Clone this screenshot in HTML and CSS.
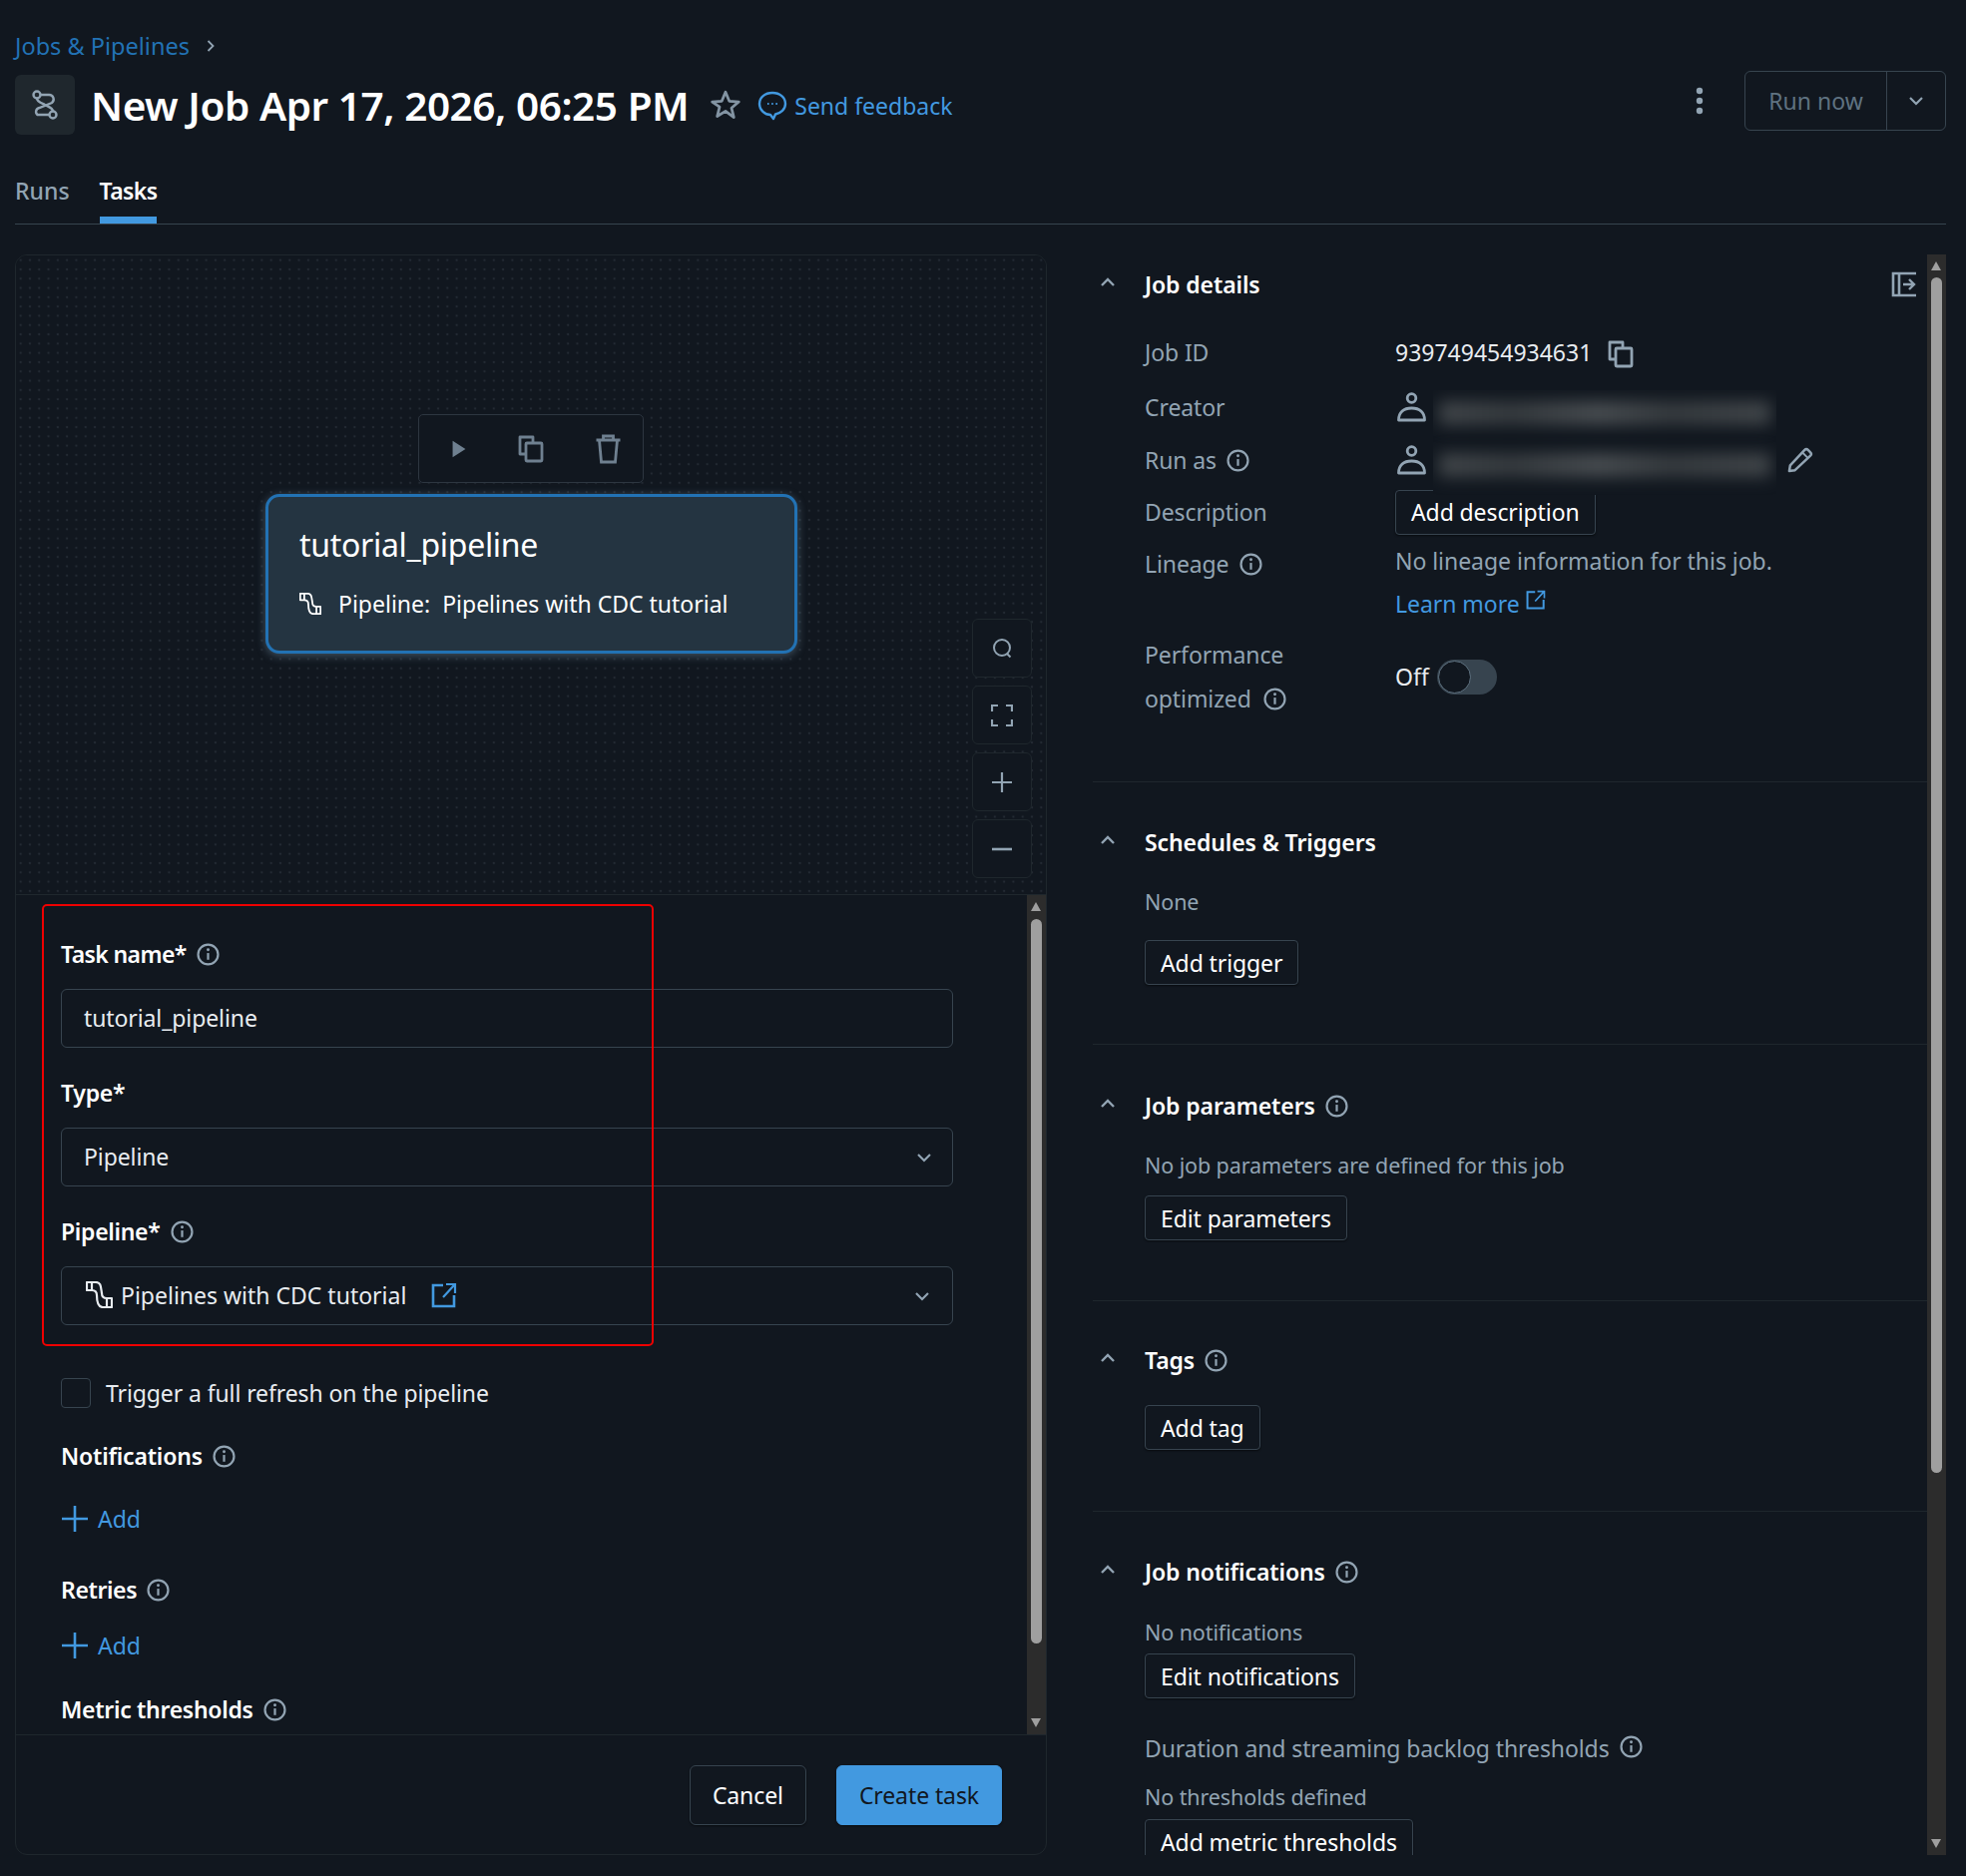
FILE: index.html

```html
<!DOCTYPE html>
<html lang="en">
<head>
    <meta charset="UTF-8">
    <title>New Job Apr 17, 2026, 06:25 PM</title>
    <link rel="stylesheet" href="styles.css">
</head>
<body>
    <svg class="defs" width="0" height="0">
        <symbol id="i-info" viewBox="0 0 24 24">
            <circle cx="12" cy="12" r="10.400" fill="none" stroke="currentColor" stroke-width="2.300"/>
            <path d="M12 10.500v7" stroke="currentColor" stroke-width="2.300"/>
            <circle cx="12" cy="7" r="1.500" fill="currentColor"/>
        </symbol>
        <symbol id="i-chev" viewBox="0 0 16 10">
            <path d="M2 2l6 6 6-6" fill="none" stroke="currentColor" stroke-width="2.200"/>
        </symbol>
        <symbol id="i-up" viewBox="0 0 16 10">
            <path d="M2 8l6-6 6 6" fill="none" stroke="currentColor" stroke-width="2.400"/>
        </symbol>
        <symbol id="i-pipe" viewBox="0 0 27 27">
            <path d="M1 1H10C15 1 15 5 16 12C16 15 18 17 21 17H26V26H17C12 26 11 21 11 14C11 11 9 9 6 9H1Z" fill="none" stroke="currentColor" stroke-width="2.200" stroke-linejoin="round"/>
            <path d="M6 1V9M21 17V26" stroke="currentColor" stroke-width="2.200"/>
        </symbol>
        <symbol id="i-ext" viewBox="0 0 26 26">
            <path d="M12 3H2v21h21V13" fill="none" stroke="currentColor" stroke-width="2.600"/>
            <path d="M12 15L23 3M15 2h9v9" fill="none" stroke="currentColor" stroke-width="2.200"/>
        </symbol>
        <symbol id="i-copy" viewBox="0 0 26 28">
            <path d="M7 19H2V2h13v6" fill="none" stroke="currentColor" stroke-width="2.800" stroke-linejoin="round"/>
            <rect x="8" y="8" width="16" height="18" rx="1" fill="none" stroke="currentColor" stroke-width="2.800"/>
        </symbol>
        <symbol id="i-user" viewBox="0 0 30 30">
            <circle cx="15" cy="6" r="4.300" fill="none" stroke="currentColor" stroke-width="2.800"/>
            <path d="M2 28c0-8 5-12 13-12s13 4 13 12z" fill="none" stroke="currentColor" stroke-width="2.800" stroke-linejoin="round"/>
        </symbol>
        <symbol id="i-plus" viewBox="0 0 28 28">
            <path d="M14 1v26M1 14h26" stroke="currentColor" stroke-width="2.600"/>
        </symbol>
    </svg>

    <div class="page">
        <div class="crumbs"><a class="link">Jobs &amp; Pipelines</a><svg class="crumb-sep" viewBox="0 0 8 14"><path d="M1.500 2l5 5-5 5" fill="none" stroke="currentColor" stroke-width="1.800"/></svg></div>

        <header class="title-row">
            <div class="job-icon">
                <svg viewBox="0 0 26 30" width="26" height="30"><g fill="none" stroke="currentColor" stroke-width="2.400"><circle cx="5" cy="5" r="3.500"/><circle cx="21" cy="25" r="3.500"/><path d="M8.500 5H17a4.500 4.500 0 0 1 3 8L7.500 18a4 4 0 0 0-2 7H17.500"/><path d="M5 8.500C5 12 9 13 13 15C17 17 21 18 21 21.500"/></g></svg>
            </div>
            <h1 class="title">New Job Apr 17, 2026, 06:25 PM</h1>
            <svg class="star" viewBox="0 0 30 30"><path d="M15 3l3.500 8.500 9 .7-6.900 5.800 2.200 8.800L15 21l-7.800 4.800 2.200-8.800L2.500 12.200l9-.7z" fill="none" stroke="currentColor" stroke-width="2.600" stroke-linejoin="round"/></svg>
            <svg class="bubble" viewBox="0 0 30 30"><path d="M15 2C7.500 2 2 6.800 2 13s5.500 11 11 11l3 4 2-4.500c5.500-1 10-5 10-10.500C28 6.800 22.500 2 15 2z" fill="none" stroke="currentColor" stroke-width="2.400" stroke-linejoin="round"/><path d="M10 13h1.500M14.200 13h1.500M18.400 13h1.500" stroke="currentColor" stroke-width="2"/></svg>
            <a class="link feedback">Send feedback</a>
            <div class="spacer"></div>
            <svg class="kebab" viewBox="0 0 8 28"><circle cx="4" cy="4" r="3.200"/><circle cx="4" cy="14" r="3.200"/><circle cx="4" cy="24" r="3.200"/></svg>
            <div class="run-group">
                <span class="run-btn">Run now</span>
                <span class="run-caret"><svg class="chev-sm"><use href="#i-chev"/></svg></span>
            </div>
        </header>

        <nav class="tabs">
            <span class="tab">Runs</span>
            <span class="tab tab-on">Tasks</span>
        </nav>

        <main class="split">
            <section class="left">
                <div class="canvas">
                    <div class="node-tools">
                        <svg class="tool play" viewBox="0 0 16 24"><path d="M1 3l14 9-14 9z" fill="currentColor"/></svg>
                        <svg class="tool"><use href="#i-copy"/></svg>
                        <svg class="tool trash" viewBox="0 0 26 30"><path d="M1 6h24M8 6V2h10v4M4 6l2 22h14l2-22" fill="none" stroke="currentColor" stroke-width="2.800"/></svg>
                    </div>
                    <div class="node">
                        <div class="node-name">tutorial_pipeline</div>
                        <div class="node-sub"><svg class="pipe-sm"><use href="#i-pipe"/></svg><span>Pipeline:&nbsp; Pipelines with CDC tutorial</span></div>
                    </div>
                    <div class="zoom-bar">
                        <div class="zoom-btn"><svg viewBox="0 0 24 24" width="24" height="24"><circle cx="12" cy="11" r="8" fill="none" stroke="currentColor" stroke-width="2"/><path d="M17 17l3.500 3.500" stroke="currentColor" stroke-width="2"/></svg></div>
                        <div class="zoom-btn"><svg viewBox="0 0 22 22" width="22" height="22"><path d="M1 7V1h6M15 1h6v6M21 15v6h-6M7 21H1v-6" fill="none" stroke="currentColor" stroke-width="2.200"/></svg></div>
                        <div class="zoom-btn"><svg viewBox="0 0 22 22" width="22" height="22"><path d="M11 1v20M1 11h20" stroke="currentColor" stroke-width="2.200"/></svg></div>
                        <div class="zoom-btn"><svg viewBox="0 0 22 22" width="22" height="22"><path d="M1 11h20" stroke="currentColor" stroke-width="2.600"/></svg></div>
                    </div>
                </div>

                <div class="form-pane">
                    <div class="form">
                        <div class="f-label first">Task name* <svg class="info"><use href="#i-info"/></svg></div>
                        <div class="f-input">tutorial_pipeline</div>
                        <div class="f-label">Type*</div>
                        <div class="f-input">Pipeline<svg class="chev-sm f-caret"><use href="#i-chev"/></svg></div>
                        <div class="f-label">Pipeline* <svg class="info"><use href="#i-info"/></svg></div>
                        <div class="f-input f-pipe">
                            <svg class="pipe-md"><use href="#i-pipe"/></svg>
                            <span>Pipelines with CDC tutorial</span>
                            <svg class="ext-md"><use href="#i-ext"/></svg>
                            <svg class="chev-sm f-caret"><use href="#i-chev"/></svg>
                        </div>
                        <label class="check-row"><span class="check"></span>Trigger a full refresh on the pipeline</label>
                        <div class="f-label notif">Notifications <svg class="info"><use href="#i-info"/></svg></div>
                        <div class="add-row add-a"><svg class="plus"><use href="#i-plus"/></svg>Add</div>
                        <div class="f-label retries">Retries <svg class="info"><use href="#i-info"/></svg></div>
                        <div class="add-row add-b"><svg class="plus"><use href="#i-plus"/></svg>Add</div>
                        <div class="f-label metric">Metric thresholds <svg class="info"><use href="#i-info"/></svg></div>
                    </div>
                    <div class="red-box"></div>
                    <div class="scrollbar">
                        <span class="arrow-up"></span>
                        <span class="thumb thumb-form"></span>
                        <span class="arrow-down"></span>
                    </div>
                </div>

                <footer class="form-foot">
                    <button class="btn btn-foot">Cancel</button>
                    <button class="btn btn-foot btn-primary">Create task</button>
                </footer>
            </section>

            <aside class="right">
                <svg class="panel-icon" viewBox="0 0 26 26"><path d="M25 2H2v22h23M8 2v22" fill="none" stroke="currentColor" stroke-width="2.600"/><path d="M12 13h11M18 8l5 5-5 5" fill="none" stroke="currentColor" stroke-width="2.400"/></svg>

                <section class="sec sec-details">
                    <h3 class="sec-head"><svg class="chev-up"><use href="#i-up"/></svg>Job details</h3>
                    <div class="details">
                        <div class="d-label">Job ID</div>
                        <div class="d-value strong">939749454934631<svg class="copy-sm"><use href="#i-copy"/></svg></div>
                        <div class="d-label">Creator</div>
                        <div class="d-value"><svg class="user"><use href="#i-user"/></svg></div>
                        <div class="d-label">Run as <svg class="info"><use href="#i-info"/></svg></div>
                        <div class="d-value"><svg class="user"><use href="#i-user"/></svg><svg class="pencil" viewBox="0 0 28 28"><path d="M3 25l1-6L19 3a2.500 2.500 0 0 1 3.500 0l2.500 2.500a2.500 2.500 0 0 1 0 3.500L9 24z" fill="none" stroke="currentColor" stroke-width="2.600" stroke-linejoin="round"/><path d="M17 6l5 5" stroke="currentColor" stroke-width="2"/></svg></div>
                        <div class="d-label">Description</div>
                        <div class="d-value"><button class="btn">Add description</button></div>
                        <div class="d-label d-top">Lineage <svg class="info"><use href="#i-info"/></svg></div>
                        <div class="d-value d-lineage">
                            <div>No lineage information for this job.</div>
                            <div><a class="link-b">Learn more</a><svg class="ext-sm"><use href="#i-ext"/></svg></div>
                        </div>
                        <div class="d-label d-perf">Performance<br>optimized <svg class="info"><use href="#i-info"/></svg></div>
                        <div class="d-value strong">Off<span class="toggle"><span class="knob"></span></span></div>
                    </div>
                    <div class="blur-box">
                        <span class="blur-bar"></span>
                        <span class="blur-bar"></span>
                    </div>
                </section>

                <section class="sec sec-sched">
                    <h3 class="sec-head"><svg class="chev-up"><use href="#i-up"/></svg>Schedules &amp; Triggers</h3>
                    <p class="muted">None</p>
                    <button class="btn">Add trigger</button>
                </section>

                <section class="sec sec-params">
                    <h3 class="sec-head"><svg class="chev-up"><use href="#i-up"/></svg>Job parameters <svg class="info"><use href="#i-info"/></svg></h3>
                    <p class="muted">No job parameters are defined for this job</p>
                    <button class="btn">Edit parameters</button>
                </section>

                <section class="sec sec-tags">
                    <h3 class="sec-head"><svg class="chev-up"><use href="#i-up"/></svg>Tags <svg class="info"><use href="#i-info"/></svg></h3>
                    <button class="btn">Add tag</button>
                </section>

                <section class="sec sec-notif">
                    <h3 class="sec-head"><svg class="chev-up"><use href="#i-up"/></svg>Job notifications <svg class="info"><use href="#i-info"/></svg></h3>
                    <p class="muted">No notifications</p>
                    <button class="btn">Edit notifications</button>
                    <p class="muted duration">Duration and streaming backlog thresholds <svg class="info"><use href="#i-info"/></svg></p>
                    <p class="muted no-thresh">No thresholds defined</p>
                    <button class="btn btn-metric">Add metric thresholds</button>
                </section>

                <div class="scrollbar">
                    <span class="arrow-up"></span>
                    <span class="thumb thumb-right"></span>
                    <span class="arrow-down"></span>
                </div>
            </aside>
        </main>
    </div>
</body>
</html>
```

FILE: styles.css

```css
* { box-sizing: border-box; }
html, body { margin: 0; height: 100%; }
body { background: #11171f; color: #e8ecf0; font-family: "Noto Sans", Arial, sans-serif; font-size: 23px; overflow: hidden; }
.defs { position: absolute; }
.page { padding: 30px 20px 0 15px; height: 1880px; }
h1, h3, p { margin: 0; font-weight: normal; }
button { font: inherit; letter-spacing: inherit; }

.link { color: #2272b4; }
.link-b { color: #4299e0; }
.crumbs { display: flex; align-items: center; height: 32px; font-size: 23.5px; }
.crumb-sep { width: 8px; height: 14px; margin-left: 17px; color: #92a4b3; }

.title-row { display: flex; height: 64px; margin-top: 9px; }
.job-icon { width: 60px; height: 60px; margin-top: 4px; background: #1f272d; border-radius: 6px; display: flex; align-items: center; justify-content: center; color: #92a4b3; }
.title { margin-left: 16px; font-size: 40.5px; font-weight: 600; line-height: 70px; color: #fff; letter-spacing: -0.45px; white-space: nowrap; }
.star { width: 32px; height: 32px; margin: 18px 0 0 21px; color: #8394a3; }
.bubble { width: 30px; height: 30px; margin: 20px 0 0 16px; color: #4299e0; }
.feedback { color: #4299e0; margin: 19px 0 0 7px; line-height: 32px; }
.spacer { flex: 1; }
.kebab { width: 8px; height: 28px; margin: 16px 41px 0 0; fill: #92a4b3; }
.run-group { display: flex; width: 202px; height: 60px; border: 1px solid #37444f; border-radius: 6px; color: #5f7281; }
.run-btn { width: 142px; display: flex; align-items: center; justify-content: center; border-right: 1px solid #37444f; }
.run-caret { flex: 1; display: flex; align-items: center; justify-content: center; color: #92a4b3; }
.chev-sm { width: 16px; height: 10px; }

.tabs { display: flex; gap: 30px; height: 51px; margin-top: 39px; border-bottom: 1px solid #37444f; }
.tab { height: 50px; line-height: 34px; color: #92a4b3; font-weight: 500; }
.tab-on { color: #fff; font-weight: 600; letter-spacing: -0.6px; border-bottom: 7px solid #4299e0; }

.split { display: flex; gap: 46px; margin-top: 30px; height: 1604px; }

.left { width: 1034px; display: flex; flex-direction: column; border: 1px solid #1f272d; border-radius: 12px; overflow: hidden; }
.canvas { position: relative; height: 640px; flex: none; background-color: #11171f; background-image: radial-gradient(#232a33 1.2px, transparent 1.5px); background-size: 9.300px 9.300px; }
.node-tools { position: absolute; left: 403px; top: 159px; width: 226px; height: 69px; display: flex; align-items: center; gap: 51px; padding-left: 32px; background: #11171f; border: 1px solid #2d3640; border-radius: 5px; color: #6f8090; }
.tool { width: 26px; height: 28px; }
.tool.play { width: 16px; height: 22px; }
.tool.trash { width: 27px; height: 30px; }
.node { position: absolute; left: 250px; top: 239px; width: 533px; height: 160px; background: #243441; border: 3px solid #2272b4; border-radius: 14px; padding: 25px 31px; box-shadow: 0 2px 10px rgba(160, 200, 230, .35); color: #fff; }
.node-name { font-size: 32px; line-height: 46px; letter-spacing: -0.3px; }
.node-sub { display: flex; align-items: center; margin-top: 20px; line-height: 32px; }
.pipe-sm { width: 22px; height: 22px; margin-right: 17px; }
.zoom-bar { position: absolute; left: 958px; top: 364px; display: flex; flex-direction: column; gap: 8px; }
.zoom-btn { width: 60px; height: 59px; background: #11171f; border: 1px solid #1f272d; border-radius: 6px; display: flex; align-items: center; justify-content: center; color: #92a4b3; }

.form-pane { position: relative; height: 842px; flex: none; border-top: 1px solid #1f272d; overflow: hidden; }
.form { padding: 44px 0 0 45px; width: 940px; }
.f-label { display: flex; align-items: center; gap: 10px; height: 32px; padding-bottom: 2px; margin-top: 30px; font-weight: 600; color: #fff; letter-spacing: -0.3px; }
.f-label.first { margin-top: 0; letter-spacing: -0.6px; }
.info { width: 23px; height: 23px; color: #92a4b3; flex: none; }
.f-input { position: relative; display: flex; align-items: center; width: 894px; height: 59px; margin-top: 18px; padding: 0 0 2px 22px; border: 1px solid #37444f; border-radius: 6px; color: #e8ecf0; letter-spacing: -0.1px; }
.f-caret { position: absolute; right: 20px; top: 24px; color: #92a4b3; }
.f-pipe { padding-left: 24px; letter-spacing: 0; }
.f-pipe .f-caret { right: 22px; }
.pipe-md { width: 27px; height: 27px; margin-right: 8px; flex: none; }
.ext-md { width: 26px; height: 26px; margin-left: 25px; color: #4299e0; }
.check-row { display: flex; align-items: center; gap: 15px; height: 32px; margin-top: 52px; letter-spacing: -0.1px; }
.check { width: 30px; height: 30px; border: 1px solid #37444f; border-radius: 4px; }
.f-label.notif { margin-top: 32px; letter-spacing: -0.2px; }
.add-row { display: flex; align-items: center; gap: 9px; height: 32px; color: #4299e0; }
.add-a { margin-top: 30px; }
.add-b { margin-top: 23px; }
.f-label.retries { margin-top: 40px; letter-spacing: -0.4px; }
.f-label.metric { margin-top: 33px; }
.plus { width: 28px; height: 28px; }
.red-box { position: absolute; left: 26px; top: 9px; width: 613px; height: 443px; border: 2px solid #e00; border-radius: 5px; pointer-events: none; }

.scrollbar { position: absolute; right: 0; top: 0; bottom: 0; width: 19px; background: #2c2c2c; }
.arrow-up, .arrow-down { position: absolute; left: 4px; width: 0; height: 0; border-left: 5.5px solid transparent; border-right: 5.5px solid transparent; }
.arrow-up { top: 7px; border-bottom: 9px solid #9f9f9f; }
.arrow-down { bottom: 7px; border-top: 9px solid #9f9f9f; }
.thumb { position: absolute; left: 4px; width: 11px; background: #9f9f9f; border-radius: 6px; }
.thumb-form { top: 24px; height: 726px; }
.thumb-right { top: 23px; height: 1198px; }

.form-foot { flex: 1; display: flex; justify-content: flex-end; align-items: flex-start; gap: 30px; padding: 30px 44px 0 0; border-top: 1px solid #1f272d; }
.btn { height: 45px; padding: 0 15px; background: #11171f; color: #fff; border: 1px solid #37444f; border-radius: 4px; box-shadow: 0 1px 2px rgba(0, 0, 0, .5); letter-spacing: -0.1px; }
.btn-foot { height: 60px; padding: 0 22px; border-radius: 6px; }
.btn-primary { background: #4299e0; border-color: #4299e0; color: #11171f; }

.right { position: relative; flex: 1; height: 1604px; overflow: hidden; }
.panel-icon { position: absolute; right: 29px; top: 17px; width: 26px; height: 26px; color: #92a4b3; }
.sec { margin-right: 19px; padding-left: 52px; border-bottom: 1px solid #1f272d; }
.sec-head { display: flex; align-items: center; gap: 10px; height: 40px; margin: 0 0 0 -52px; font-size: 23px; font-weight: 600; color: #fff; letter-spacing: -0.1px; }
.chev-up { width: 16px; height: 10px; margin: -4px 19px 0 7px; color: #92a4b3; }
.muted { color: #92a4b3; line-height: 32px; font-size: 21.5px; letter-spacing: -0.1px; }

.sec-details { position: relative; height: 529px; padding-top: 10px; }
.details { display: grid; grid-template-columns: 251px 1fr; grid-template-rows: 56px 54px 52px 52px 95px 88px; margin-top: 20px; }
.d-label { display: flex; align-items: center; gap: 10px; color: #92a4b3; letter-spacing: -0.1px; }
.d-value { position: relative; display: flex; align-items: center; color: #92a4b3; }
.d-value.strong { color: #e8ecf0; }
.d-top { height: 52px; }
.d-lineage { display: block; line-height: 43px; padding-top: 2px; letter-spacing: -0.05px; }
.d-perf { display: block; line-height: 44px; }
.d-perf .info { vertical-align: -3px; margin-left: 6px; }
.copy-sm { width: 26px; height: 28px; margin: 4px 0 0 16px; color: #92a4b3; }
.user { width: 31px; height: 30px; margin-left: 1px; color: #92a4b3; }
.pencil { position: absolute; left: 392px; top: 13px; width: 27px; height: 27px; color: #92a4b3; }
.ext-sm { width: 20px; height: 20px; margin-left: 6px; vertical-align: 3px; color: #4299e0; }
.toggle { position: relative; display: inline-block; width: 60px; height: 35px; margin-left: 8px; background: #37444f; border-radius: 18px; }
.knob { position: absolute; left: 1px; top: 1px; width: 33px; height: 33px; background: #11171f; border: 1px solid #5f7281; border-radius: 50%; }
.blur-box { position: absolute; left: 341px; top: 136px; width: 344px; height: 105px; background: #11171f; padding: 11px 6px 0 6px; overflow: hidden; }
.blur-bar { display: block; height: 24px; margin-bottom: 28px; background: linear-gradient(90deg, #41464a, #363b3f 22%, #484d51 48%, #363b3f 70%, #41464a); filter: blur(8px); }

.sec-sched { height: 263px; padding-top: 40px; }
.sec-sched .muted { margin-top: 24px; }
.sec-sched .btn { margin-top: 22px; }
.sec-params { height: 257px; padding-top: 41px; }
.sec-params .muted { margin-top: 24px; }
.sec-params .btn { margin-top: 14px; }
.sec-tags { height: 211px; padding-top: 39px; }
.sec-tags .btn { margin-top: 25px; }
.sec-notif { padding-top: 40px; border-bottom: 0; }
.sec-notif .muted { margin-top: 25px; }
.sec-notif .btn { margin-top: 5px; }
.sec-notif .duration { margin-top: 34px; display: flex; align-items: center; gap: 10px; font-size: 23px; }
.duration .info { margin-top: -4px; }
.sec-notif .no-thresh { margin-top: 17px; }
.sec-notif .btn-metric { margin-top: 6px; }
```
